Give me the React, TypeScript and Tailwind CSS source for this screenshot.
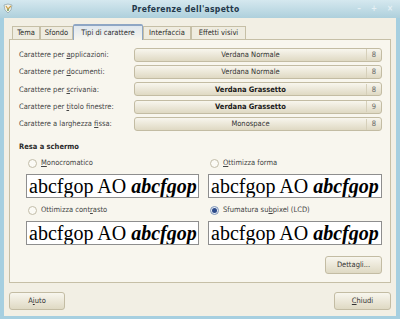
import React from "react";

const ui = "font-['DejaVu_Sans_Condensed','DejaVu_Sans',sans-serif]";

function U({ children }: { children: React.ReactNode }) {
  return <span className="underline underline-offset-[1px]">{children}</span>;
}

const fonts = [
  { label: <>Carattere per <U>a</U>pplicazioni:</>, name: "Verdana Normale", size: "8", bold: false },
  { label: <>Carattere per <U>d</U>ocumenti:</>, name: "Verdana Normale", size: "8", bold: false },
  { label: <>Carattere per <U>s</U>crivania:</>, name: "Verdana Grassetto", size: "8", bold: true },
  { label: <>Carattere per <U>t</U>itolo finestre:</>, name: "Verdana Grassetto", size: "9", bold: true },
  { label: <>Carattere a larghezza <U>f</U>issa:</>, name: "Monospace", size: "8", bold: false },
];

const tabs = [
  { name: "Tema", w: "w-[28px]" },
  { name: "Sfondo", w: "w-[33px]" },
  { name: "Tipi di carattere", w: "w-[70px]", active: true },
  { name: "Interfaccia", w: "w-[48px]" },
  { name: "Effetti visivi", w: "w-[55px]" },
];

const btn =
  "border border-[#c3bca3] rounded-[3px] bg-gradient-to-b from-[#f8f6ee] to-[#dfd9c3] text-[#333]";

function Radio({ checked, children }: { checked?: boolean; children: React.ReactNode }) {
  return (
    <div className="flex items-center gap-[4px] h-[10px] ml-[2px]">
      <span
        className={
          "w-[9px] h-[9px] rounded-full border flex items-center justify-center " +
          (checked ? "border-[#7f95b8] bg-[#e6ecf4]" : "border-[#c2bca8] bg-[#fbfaf5]")
        }
      >
        {checked && <span className="w-[5px] h-[5px] rounded-full bg-[#2c4a8a]" />}
      </span>
      <span className="text-[7.5px] text-[#444]">{children}</span>
    </div>
  );
}

function Preview() {
  return (
    <div className="h-[24px] bg-white border border-[#8e8e8e] pl-[2px] flex items-center overflow-hidden font-['Liberation_Serif',serif] text-[20px] leading-[24px] text-black whitespace-nowrap">
      abcfgop AO <span className="ml-[5px] italic font-bold">abcfgop</span>
    </div>
  );
}

export default function App() {
  return (
    <div className={"w-[400px] h-[319px] flex flex-col bg-[#a6cfe0] " + ui}>
      {/* title bar */}
      <div className="h-[18px] flex items-center bg-gradient-to-b from-[#d5e8ef] to-[#aed0dc] px-[3px]">
        <svg width="11" height="11" viewBox="0 0 11 11">
          <path d="M1 2 L5 1 L9 2 L8 7 L5 10 L2 7 Z" fill="#f3f1e6" stroke="#8aa0a8" strokeWidth="0.7" />
          <path d="M3 3 L5 6 L8 3" fill="none" stroke="#c9a04a" strokeWidth="1.2" />
          <circle cx="5" cy="7" r="1" fill="#6f9a5a" />
        </svg>
        <div className="flex-1 text-center text-[8.5px] font-bold text-[#23374a] tracking-[0.3px]">
          Preferenze dell'aspetto
        </div>
        <div className="flex items-center gap-[10px] pr-[4px] text-[8px] text-[#e6f0f4] font-bold">
          <span>–</span>
          <span>+</span>
          <span>×</span>
        </div>
      </div>

      {/* body */}
      <div className="flex-1 mx-[4px] mb-[3px] bg-[#f2efe4] pt-[6px] px-[5px] pb-[6px] flex flex-col">
        {/* tabs */}
        <div className="flex items-end ml-[3px] h-[15px] relative z-10">
          {tabs.map((t) =>
            t.active ? (
              <div
                key={t.name}
                className={
                  t.w +
                  " h-[16px] -mb-px border border-b-0 border-[#8ea6c4] border-t-[2px] rounded-t-[2px] bg-gradient-to-b from-[#dfe7ee] to-[#f8f6ee] text-[7.5px] text-[#2c2c2c] flex items-center justify-center"
                }
              >
                {t.name}
              </div>
            ) : (
              <div
                key={t.name}
                className={
                  t.w +
                  " h-[13px] border border-b-0 border-[#c6bfa6] bg-[#efece0] text-[7.5px] text-[#2c2c2c] flex items-center justify-center"
                }
              >
                {t.name}
              </div>
            )
          )}
        </div>

        {/* panel */}
        <div className="border border-[#c6bfa6] bg-[#f8f6ee] pt-[8px] pl-[9px] pr-[8px] pb-[8px] flex flex-col">
          <div className="flex flex-col gap-[3.3px]">
            {fonts.map((f, i) => (
              <div key={i} className="flex items-center h-[14px]">
                <div className="w-[115px] text-[7.5px] text-[#444]">{f.label}</div>
                <div className={btn + " flex-1 h-[14px] flex items-center text-[7.5px]"}>
                  <div className={"flex-1 text-center " + (f.bold ? "font-bold text-[#1a1a1a]" : "")}>
                    {f.name}
                  </div>
                  <div className="w-[15px] h-[11px] border-l border-[#d6d0ba] flex items-center justify-center text-[#666]">
                    {f.size}
                  </div>
                </div>
              </div>
            ))}
          </div>

          <div className="mt-[11px] h-[10px] flex items-center text-[7.5px] font-bold text-[#2a2a2a]">
            Resa a schermo
          </div>

          <div className="pl-[7px] mt-[6px] grid grid-cols-[173px_174px] gap-x-[9px]">
            <div className="flex flex-col">
              <Radio>
                <U>M</U>onocromatico
              </Radio>
              <div className="mt-[6px]">
                <Preview />
              </div>
              <div className="mt-[7px]">
                <Radio>
                  Ottimizza cont<U>r</U>asto
                </Radio>
              </div>
              <div className="mt-[6px]">
                <Preview />
              </div>
            </div>
            <div className="flex flex-col">
              <Radio>
                <U>O</U>ttimizza forma
              </Radio>
              <div className="mt-[6px]">
                <Preview />
              </div>
              <div className="mt-[7px]">
                <Radio checked>
                  Sfumatura su<U>b</U>pixel (LCD)
                </Radio>
              </div>
              <div className="mt-[6px]">
                <Preview />
              </div>
            </div>
          </div>

          <div className="mt-[11px] flex justify-end">
            <div className={btn + " w-[57px] h-[18px] flex items-center justify-center text-[7.5px]"}>
              Dettagli...
            </div>
          </div>
        </div>

        {/* bottom buttons */}
        <div className="mt-[9px] flex justify-between">
          <div className={btn + " w-[56px] h-[18px] flex items-center justify-center text-[7.5px]"}>
            A<U>i</U>uto
          </div>
          <div className={btn + " w-[57px] h-[18px] flex items-center justify-center text-[7.5px]"}>
            <U>C</U>hiudi
          </div>
        </div>
      </div>
    </div>
  );
}
